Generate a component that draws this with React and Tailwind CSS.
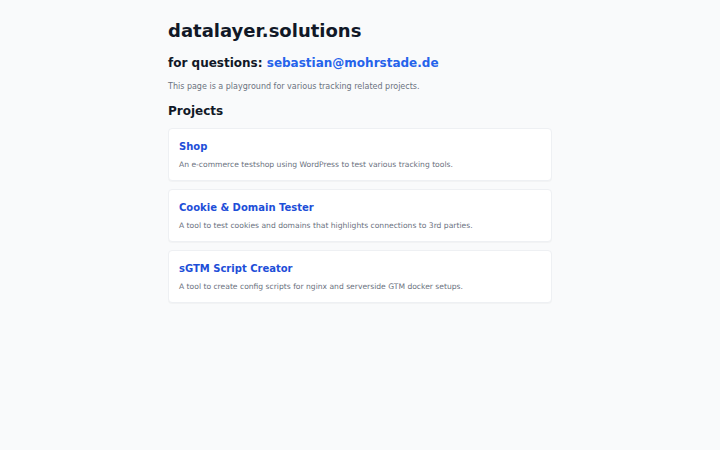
export default function App() {
  const projects = [
    { title: "Shop", desc: "An e-commerce testshop using WordPress to test various tracking tools." },
    { title: "Cookie & Domain Tester", desc: "A tool to test cookies and domains that highlights connections to 3rd parties." },
    { title: "sGTM Script Creator", desc: "A tool to create config scripts for nginx and serverside GTM docker setups." },
  ];
  return (
    <div className="min-h-[450px] bg-[#f9fafb] text-[#111827]" style={{ fontFamily: '"DejaVu Sans", sans-serif' }}>
      <div className="mx-auto max-w-[384px] pt-[20px]">
        <h1 className="text-[18px] leading-[22px] font-bold">datalayer.solutions</h1>
        <h2 className="mt-[13px] text-[12px] leading-[16px] font-bold">
          for questions: <a className="text-[#2563eb]">sebastian@mohrstade.de</a>
        </h2>
        <p className="mt-[10px] text-[8px] leading-[11px] text-[#6b7280]">This page is a playground for various tracking related projects.</p>
        <h2 className="mt-[11px] text-[12px] leading-[16px] font-bold">Projects</h2>
        <div className="mt-[9px] flex flex-col gap-[8px]">
          {projects.map((p) => (
            <div key={p.title} className="rounded-[4px] border border-[#eef0f3] bg-white px-[10px] pt-[11px] pb-[10px] shadow-[0_1px_1px_rgba(0,0,0,0.03)]">
              <h3 className="text-[10px] leading-[14px] font-bold text-[#1d4ed8]">{p.title}</h3>
              <p className="mt-[6px] text-[7.6px] leading-[10px] text-[#6b7280]">{p.desc}</p>
            </div>
          ))}
        </div>
      </div>
    </div>
  );
}
